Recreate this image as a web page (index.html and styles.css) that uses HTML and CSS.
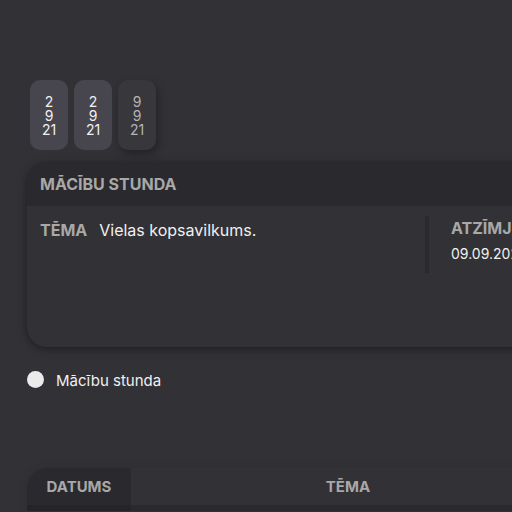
FILE: index.html
```html
<!DOCTYPE html>
<html lang="lv">
<head>
<meta charset="utf-8">
<title>Mācību stunda</title>
<link rel="stylesheet" href="styles.css">
</head>
<body>
<main class="page">
  <nav class="days">
    <button class="day" type="button">2<br>9<br>21</button>
    <button class="day" type="button">2<br>9<br>21</button>
    <button class="day day-current" type="button">9<br>9<br>21</button>
  </nav>
  <section class="lesson">
    <h2 class="lesson-title">MĀCĪBU STUNDA</h2>
    <div class="lesson-body">
      <div class="topic"><h3 class="label">TĒMA</h3><p class="topic-text">Vielas kopsavilkums.</p></div>
      <div class="marks"><h3 class="label">ATZĪMJU</h3><p class="marks-date">09.09.2021</p></div>
    </div>
  </section>
  <div class="legend"><span class="dot"></span><span class="legend-text">Mācību stunda</span></div>
  <table class="log">
    <thead><tr><th class="date-col" scope="col">DATUMS</th><th class="topic-col" scope="col">TĒMA</th></tr></thead>
  </table>
</main>
</body>
</html>
```
FILE: styles.css
```css
* { box-sizing: border-box; margin: 0; }
html { background: #323135; overflow: hidden; }
body {
  font-family: Inter, "Liberation Sans", sans-serif;
  color: #f0f0f0;
  background: #323135;
}
.page { padding: 80px 0 0 27px; }
.days { display: flex; gap: 6px; padding-left: 3px; }
.day {
  width: 38px;
  height: 70px;
  padding: 2px 0 0;
  border: 0;
  border-radius: 10px;
  background: #47464e;
  color: #f0f0f0;
  font: 14px/14px Inter, sans-serif;
  text-align: center;
}
.day-current {
  background: #38373c;
  color: #b4b4b4;
  box-shadow: 2px 4px 8px rgba(0, 0, 0, .3);
}
.lesson {
  min-width: 600px;
  margin-top: 12px;
  border-radius: 20px;
  background: #323135;
  box-shadow: 0 2px 8px rgba(0, 0, 0, .4);
}
.lesson-title {
  padding: 12px 13px;
  border-radius: 20px 0 0 0;
  background: #2a292d;
  color: #a8a8a8;
  font-size: 16px;
  line-height: 20px;
}
.lesson-body {
  display: grid;
  grid-template-columns: 385px 1fr;
  align-items: start;
  min-height: 141px;
  padding: 10px 0 0 13px;
}
.topic { display: flex; gap: 12px; padding-top: 4px; }
.label {
  color: #a8a8a8;
  font-size: 16px;
  line-height: 20px;
}
.topic-text {
  font-size: 16px;
  line-height: 20px;
}
.marks { min-height: 57px; padding: 2px 0 0 22px; border-left: 4px solid #2a292d; }
.marks-date { margin-top: 8px; font-size: 14px; line-height: 16px; }
.legend {
  display: flex;
  align-items: flex-start;
  gap: 12px;
  margin-top: 24px;
  font-size: 15px;
  line-height: 20px;
}
.dot { width: 17px; height: 17px; border-radius: 50%; background: #ebebeb; }
.log {
  table-layout: fixed;
  width: 538px;
  margin-top: 77px;
  border-spacing: 0;
  border-radius: 20px 0 0 0;
  box-shadow: 0 0 8px rgba(0, 0, 0, .1);
}
.log th {
  height: 43px;
  padding: 0;
  border-bottom: 6px solid #2a292d;
  color: #a8a8a8;
  font-size: 15px;
  line-height: 18px;
}
.log .date-col {
  width: 104px;
  border-bottom-color: #252428;
  border-radius: 20px 0 0 0;
  background: #2a292d;
}
```
